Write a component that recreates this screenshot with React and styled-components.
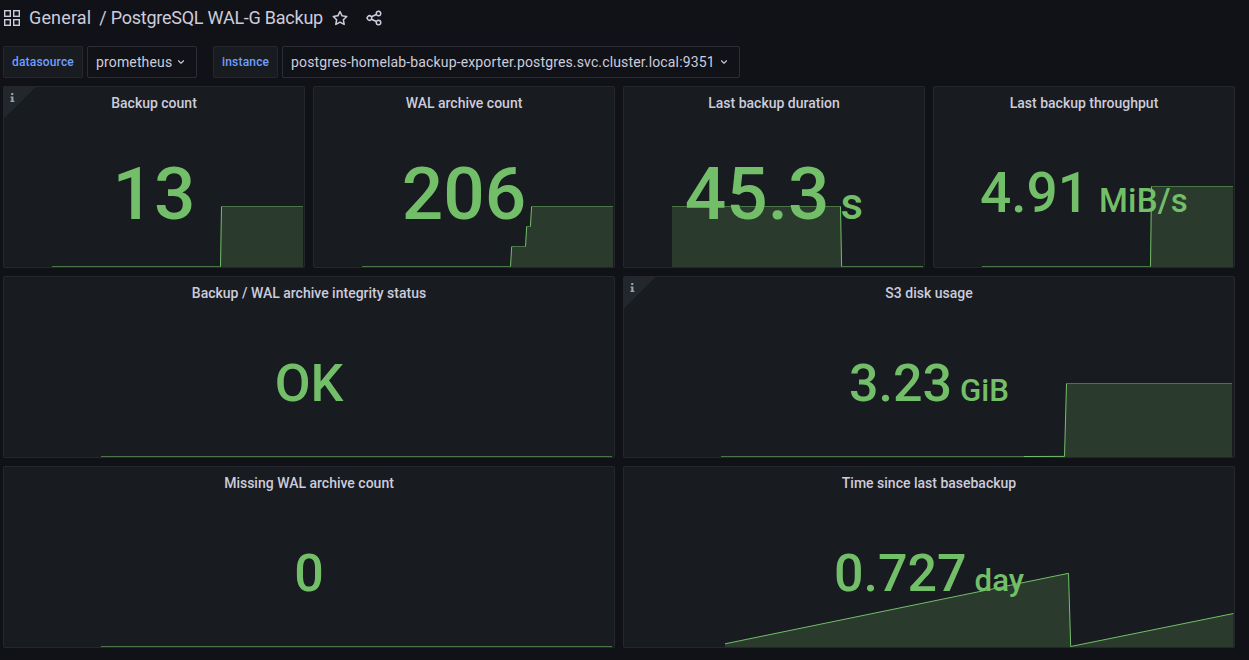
import React from 'react';
import styled, { createGlobalStyle } from 'styled-components';

const GlobalStyle = createGlobalStyle`
  *, *::before, *::after { box-sizing: border-box; }
  html, body { margin: 0; background: #111217; }
  body {
    height: 660px;
    overflow: hidden;
    font-family: Roboto, "Liberation Sans", sans-serif;
    font-size: 14px;
    color: rgb(204, 204, 220);
  }
`;

const Page = styled.main`
  width: 1249px;
  height: 660px;
  padding: 0 14px 0 3px;
  display: flex;
  flex-direction: column;
`;

const NavBar = styled.header`
  display: flex;
  align-items: center;
  height: 36px;
  font-size: 18px;
  white-space: pre;
  svg { display: block; flex: none; }
`;

const Crumb = styled.span`
  margin-left: ${(p) => p.$gap}px;
  letter-spacing: ${(p) => p.$spacing || 0}px;
  line-height: 20px;
  margin-bottom: 1px;
`;

const IconSlot = styled.span`
  margin-left: ${(p) => p.$gap}px;
`;

const Variables = styled.div`
  display: flex;
  gap: 16px;
  margin: 10px 0 8px;
`;

const Variable = styled.div`
  display: flex;
  gap: 4px;
`;

const VariableLabel = styled.label`
  display: flex;
  align-items: center;
  width: ${(p) => p.$width}px;
  height: 32px;
  padding-left: 8px;
  border: 1px solid rgba(204, 204, 220, 0.07);
  border-radius: 2px;
  background: #181b1f;
  color: #6e9fff;
  font-size: 12px;
  font-weight: 500;
  letter-spacing: 0.18px;
`;

const VariableSelect = styled.div`
  display: flex;
  align-items: center;
  width: ${(p) => p.$width}px;
  height: 32px;
  padding-left: 8px;
  border: 1px solid rgba(204, 204, 220, 0.15);
  border-radius: 2px;
  letter-spacing: 0.147px;
  svg { margin-left: 2px; flex: none; }
`;

const Grid = styled.section`
  display: grid;
  grid-template-columns: repeat(4, 302px);
  grid-auto-rows: 182px;
  gap: 8px;
`;

const PanelBox = styled.article`
  position: relative;
  grid-column: span ${(p) => p.$span};
  display: flex;
  flex-direction: column;
  border: 1px solid rgba(204, 204, 220, 0.07);
  border-radius: 2px;
  background: #181b1f;
  overflow: hidden;
`;

const PanelTitle = styled.h2`
  margin: 0;
  height: 32px;
  line-height: 32px;
  text-align: center;
  font-size: 14px;
  font-weight: 500;
`;

const InfoCorner = styled.span`
  position: absolute;
  top: 0;
  left: 0;
  width: 32px;
  height: 32px;
  background: linear-gradient(135deg, #22272c 50%, transparent 50%);
  svg { position: absolute; left: 6px; top: 6px; }
`;

const Sparkline = styled.svg`
  position: absolute;
  left: 0;
  top: 0;
`;

const ValueRow = styled.div`
  position: relative;
  flex: 1;
  display: flex;
  align-items: baseline;
  justify-content: center;
  padding-top: ${(p) => p.$top}px;
  color: #73bf69;
  font-weight: 500;
  line-height: 1.2;
  font-size: ${(p) => p.$size}px;
  white-space: pre;
`;

const Unit = styled.span`
  font-size: 0.6em;
  margin-left: ${(p) => p.$gap}px;
  letter-spacing: ${(p) => p.$spacing || 0}px;
`;

const AppsIcon = () => (
  <svg width="18" height="18" viewBox="0 0 18 18" fill="none" stroke="currentColor" strokeWidth="1.4">
    <rect x="1.7" y="1.7" width="5.6" height="5.6" />
    <rect x="10.7" y="1.7" width="5.6" height="5.6" />
    <rect x="1.7" y="10.7" width="5.6" height="5.6" />
    <rect x="10.7" y="10.7" width="5.6" height="5.6" />
  </svg>
);

const StarIcon = () => (
  <svg width="18" height="18" viewBox="0 0 24 24" fill="currentColor">
    <path d="M22,9.67A1,1,0,0,0,21.14,9l-5.69-.83L12.9,3a1,1,0,0,0-1.8,0L8.55,8.16,2.86,9a1,1,0,0,0-.81.68,1,1,0,0,0,.25,1l4.13,4-1,5.68A1,1,0,0,0,6.9,21.44L12,18.77l5.1,2.67a.93.93,0,0,0,.46.12,1,1,0,0,0,.59-.19,1,1,0,0,0,.4-1l-1-5.68,4.13-4A1,1,0,0,0,22,9.67Zm-6.15,4a1,1,0,0,0-.29.88l.72,4.2-3.76-2a1.06,1.06,0,0,0-.94,0l-3.76,2,.72-4.2a1,1,0,0,0-.29-.88l-3-3,4.21-.61a1,1,0,0,0,.76-.55L12,5.7l1.88,3.82a1,1,0,0,0,.76.55l4.21.61Z" />
  </svg>
);

const ShareIcon = () => (
  <svg width="18" height="18" viewBox="0 0 24 24" fill="currentColor">
    <path d="M18,14a4,4,0,0,0-3.08,1.48l-5.1-2.35a3.64,3.64,0,0,0,0-2.26l5.1-2.35A4,4,0,1,0,14,6a4.17,4.17,0,0,0,.07.71L8.79,9.14a4,4,0,1,0,0,5.72l5.28,2.43A4.17,4.17,0,0,0,14,18a4,4,0,1,0,4-4ZM18,4a2,2,0,1,1-2,2A2,2,0,0,1,18,4ZM6,14a2,2,0,1,1,2-2A2,2,0,0,1,6,14Zm12,6a2,2,0,1,1,2-2A2,2,0,0,1,18,20Z" />
  </svg>
);

const AngleDown = () => (
  <svg width="14" height="14" viewBox="0 0 24 24" fill="currentColor">
    <path d="M17,9.17a1,1,0,0,0-1.41,0L12,12.71,8.46,9.17a1,1,0,0,0-1.41,0,1,1,0,0,0,0,1.42l4.24,4.24a1,1,0,0,0,1.42,0L17,10.59A1,1,0,0,0,17,9.17Z" />
  </svg>
);

const InfoGlyph = () => (
  <svg width="5" height="10" viewBox="0 0 5 10" fill="#9fa1ad">
    <rect x="1.2" y="0" width="2.1" height="2" />
    <path d="M0.5 3.4H3.4V7.7H4.4V9H0.4V7.7H1.3V4.7H0.5Z" />
  </svg>
);

const PANELS = [
  { title: 'Backup count', value: '13', size: 73, top: 32, info: true, line: [[48, 179.5], [216.5, 179.5], [217.5, 119.5], [299, 119.5]] },
  { title: 'WAL archive count', value: '206', size: 73, top: 32, line: [[48, 179.5], [196.5, 179.5], [197.7, 159.5], [211.5, 159.5], [212.7, 139.5], [216.4, 139.5], [217.6, 119.5], [299, 119.5]] },
  { title: 'Last backup duration', value: '45.3', unit: 's', gap: 11, size: 73, top: 32, line: [[48, 119.5], [216.5, 119.5], [217.6, 179.5], [299, 179.5]] },
  { title: 'Last backup throughput', value: '4.91', unit: 'MiB/s', gap: 10, unitSpacing: 0.2, size: 55, top: 41, line: [[48, 179.5], [216.5, 179.5], [217.5, 99.5], [299, 99.5]] },
  { title: 'Backup / WAL archive integrity status', value: 'OK', size: 52, top: 44, span: 2, line: [[97, 179.5], [608, 179.5]] },
  { title: 'S3 disk usage', value: '3.23', unit: 'GiB', gap: 8, size: 52, top: 44, span: 2, info: true, line: [[97, 179.5], [400, 179.5], [440.5, 179.4], [442.5, 106.5], [608, 106.5]] },
  { title: 'Missing WAL archive count', value: '0', size: 52, top: 44, span: 2, line: [[97, 179.5], [608, 179.5]] },
  { title: 'Time since last basebackup', value: '0.727', unit: 'day', gap: 8, size: 52, top: 44, span: 2, line: [[101, 176.8], [444.5, 106.3], [446.7, 179.5], [609.5, 146.5]] },
];

function Panel({ title, value, unit, gap, unitSpacing, size, top, span = 1, info, line }) {
  const width = span === 2 ? 610 : 300;
  const points = line.map((p) => p.join(',')).join(' ');
  const area = `${line[0][0]},180 ${points} ${line[line.length - 1][0]},180`;
  const segments = line.slice(1).map((end, i) => [line[i], end]);
  return (
    <PanelBox $span={span}>
      <Sparkline width={width} height="180" viewBox={`0 0 ${width} 180`}>
        <polygon points={area} fill="#73bf69" fillOpacity="0.2" />
        {segments.map(([a, b], i) => (
          <line
            key={i}
            x1={a[0]}
            y1={a[1]}
            x2={b[0]}
            y2={b[1]}
            stroke="#73bf69"
            strokeOpacity={a[1] === b[1] ? 0.5 : 1}
          />
        ))}
      </Sparkline>
      {info && <InfoCorner><InfoGlyph /></InfoCorner>}
      <PanelTitle>{title}</PanelTitle>
      <ValueRow $size={size} $top={top}>
        <span>{value}</span>
        {unit && <Unit $gap={gap} $spacing={unitSpacing}>{unit}</Unit>}
      </ValueRow>
    </PanelBox>
  );
}

export default function App() {
  return (
    <>
      <GlobalStyle />
      <Page>
        <NavBar>
          <AppsIcon />
          <Crumb $gap={8} $spacing={0.15}>General</Crumb>
          <Crumb $gap={8} $spacing={-0.24}>/ PostgreSQL WAL-G Backup</Crumb>
          <IconSlot $gap={8}><StarIcon /></IconSlot>
          <IconSlot $gap={16}><ShareIcon /></IconSlot>
        </NavBar>
        <Variables>
          <Variable>
            <VariableLabel $width={80}>datasource</VariableLabel>
            <VariableSelect $width={110}>prometheus<AngleDown /></VariableSelect>
          </Variable>
          <Variable>
            <VariableLabel $width={65}>instance</VariableLabel>
            <VariableSelect $width={458}>postgres-homelab-backup-exporter.postgres.svc.cluster.local:9351<AngleDown /></VariableSelect>
          </Variable>
        </Variables>
        <Grid>
          {PANELS.map((p) => <Panel key={p.title} {...p} />)}
        </Grid>
      </Page>
    </>
  );
}
